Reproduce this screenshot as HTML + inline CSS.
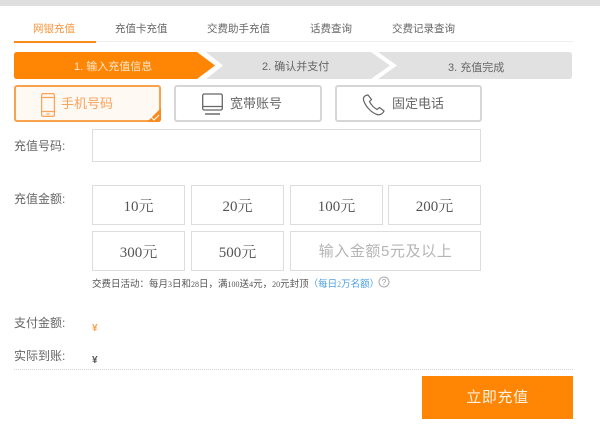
<!DOCTYPE html>
<html><head><meta charset="utf-8">
<style>
html,body{margin:0;padding:0;background:#fff}
body{width:600px;height:432px;position:relative;overflow:hidden;font-family:"Liberation Sans","Noto Sans CJK SC",sans-serif;color:#666}
.a{position:absolute;white-space:nowrap}
.b{position:absolute;box-sizing:border-box;border:1px solid #ddd;background:#fff;text-align:center;font-family:"Liberation Serif","Noto Serif CJK SC",serif;font-size:15px;color:#555;line-height:42px;height:40px}
.t{position:absolute;box-sizing:border-box;height:37px;top:85px;border:2px solid #d6d6d6;border-radius:3px;background:#fff;font-size:13px;color:#666;line-height:33px}
.l{font-size:12px;color:#666;left:14px}
.n{font-size:8px;font-family:"Liberation Serif",serif}
</style></head><body>
<div class="a" style="left:0;top:0;width:600px;height:6px;background:#dedede"></div>
<div class="a" style="left:14px;top:41px;width:559px;height:1px;background:#eee"></div>
<div class="a" style="left:14px;top:41px;width:82px;height:2px;background:#f98a1e"></div>
<div class="a" style="left:33px;top:21px;font-size:10.500px;color:#f9963c">网银充值</div>
<div class="a" style="left:115px;top:21px;font-size:10.500px;color:#666">充值卡充值</div>
<div class="a" style="left:207px;top:21px;font-size:10.500px;color:#666">交费助手充值</div>
<div class="a" style="left:310px;top:21px;font-size:10.500px;color:#666">话费查询</div>
<div class="a" style="left:392px;top:21px;font-size:10.500px;color:#666">交费记录查询</div>

<svg class="a" style="left:0;top:0" width="600" height="130">
<path d="M17 52H197L215 65.500L197 79H17Q14 79 14 76V55Q14 52 17 52Z" fill="#ff8604"/>
<path d="M206 52H371L390 65.500L371 79H206L223 65.500Z" fill="#e1e1e1"/>
<path d="M378 52H569Q572 52 572 55V76Q572 79 569 79H378L397 65.500Z" fill="#e1e1e1"/>
</svg>
<div class="a" style="left:74px;top:58px;font-size:11px;color:#ffe9d2">1. 输入充值信息</div>
<div class="a" style="left:262px;top:58px;font-size:11px;color:#666">2. 确认并支付</div>
<div class="a" style="left:448px;top:59px;font-size:11px;color:#666">3. 充值完成</div>

<div class="t" style="left:14px;width:147px;border-color:#f9a24c;background:#fff9f3;color:#f9a25a;padding-left:45px">手机号码</div>
<div class="t" style="left:174px;width:148px;padding-left:54px">宽带账号</div>
<div class="t" style="left:335px;width:147px;padding-left:55px">固定电话</div>

<svg class="a" style="left:0;top:80px" width="600" height="50" fill="none">
<path d="M147 122L161 108V119Q161 122 158 122Z" transform="translate(0,-80)" fill="#f98a1e"/>
<path d="M151 117L154 120L159 115" transform="translate(0,-80)" stroke="#fff" stroke-width="1"/>
<g stroke="#f9a25a" stroke-width="1.200">
<rect x="41.600" y="13.600" width="12.800" height="22.800" rx="1.500"/>
<path d="M42 17.500H54M42 31.500H54"/>
<path d="M46.500 34H49.500"/>
</g>
<g stroke="#666" stroke-width="1.300">
<rect x="202.700" y="14" width="19.600" height="16" rx="1.500"/>
<path d="M203 26.500H222"/>
<path d="M205 34H220" stroke="#555"/>
</g>
<path d="M368 15C364 15.500 362.500 18 364 21.500C366 26.500 371 32.500 377 34.500C380 35.500 383 33.500 384 31L379.500 27.500L377 29.500C374 28 370.500 24 369.500 21.500L371.500 19.500Z" stroke="#666" stroke-width="1.200"/>
</svg>

<div class="a l" style="top:137px">充值号码:</div>
<div class="a" style="left:92px;top:129px;width:389px;height:33px;box-sizing:border-box;border:1px solid #ddd"></div>
<div class="a l" style="top:190px">充值金额:</div>
<div class="b" style="left:92px;top:185px;width:93px">10元</div>
<div class="b" style="left:191px;top:185px;width:93px">20元</div>
<div class="b" style="left:290px;top:185px;width:93px">100元</div>
<div class="b" style="left:388px;top:185px;width:93px">200元</div>
<div class="b" style="left:92px;top:231px;width:93px">300元</div>
<div class="b" style="left:191px;top:231px;width:93px">500元</div>
<div class="b" style="left:290px;top:231px;width:191px;color:#b5b5b5;font-family:'Liberation Sans','Noto Sans CJK SC',sans-serif;letter-spacing:.6px;line-height:39px">输入金额5元及以上</div>
<div class="a" style="left:92px;top:276px;font-size:9.500px;color:#555">交费日活动：每月<span class="n">3</span>日和<span class="n">28</span>日，满<span class="n">100</span>送<span class="n">4</span>元，<span class="n">20</span>元封顶<span style="color:#4a9fe0">（每日<span class="n">2</span>万名额）</span></div>
<svg class="a" style="left:378px;top:276px" width="13" height="13"><circle cx="6" cy="6" r="5" fill="none" stroke="#aaa"/><text x="6" y="9" font-size="8" text-anchor="middle" fill="#999" font-family="Liberation Sans">?</text></svg>

<div class="a l" style="top:314px">支付金额:</div>
<div class="a" style="left:92px;top:323px;font-size:10px;font-weight:bold;color:#f9a24c">¥</div>
<div class="a l" style="top:347px">实际到账:</div>
<div class="a" style="left:92px;top:355px;font-size:10px;font-weight:bold;color:#555">¥</div>
<div class="a" style="left:14px;top:369px;width:559px;height:0;border-top:1px dotted #d4d4d4"></div>
<div class="a" style="left:422px;top:376px;width:151px;height:43px;background:#ff8604;color:#fff3e3;font-size:15px;text-align:center;line-height:44px;letter-spacing:.6px">立即充值</div>
</body></html>
